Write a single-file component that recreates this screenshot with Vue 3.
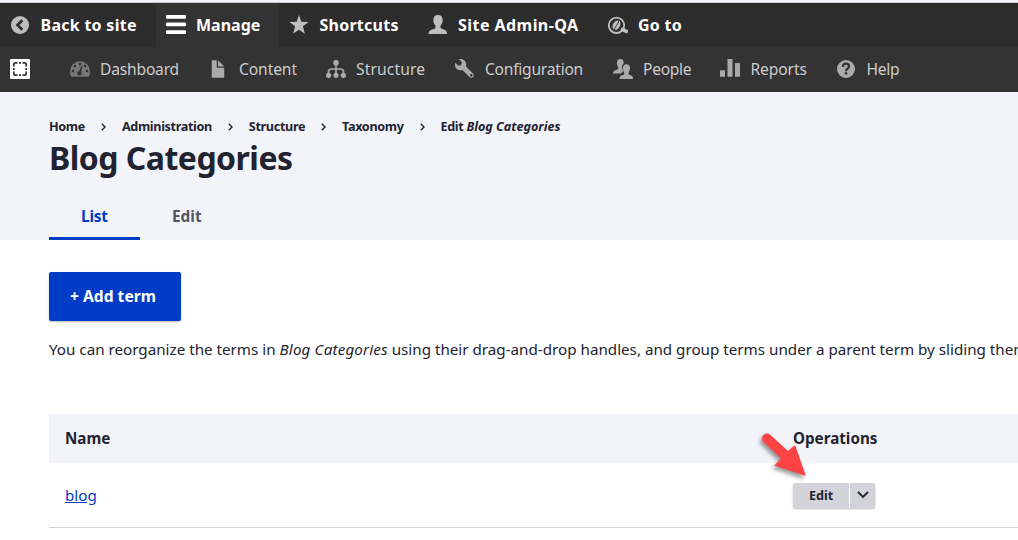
<script setup>
const crumbs = ['Home', 'Administration', 'Structure', 'Taxonomy']
</script>

<template>
  <div class="page">
    <nav class="bar">
      <a class="item w-back">
        <svg class="icon" viewBox="0 0 20 20"><circle cx="10" cy="10" r="9" fill="#bebebe" /><path d="M12.3 5.2 7.5 10l4.8 4.8" fill="none" stroke="#2d2d2d" stroke-width="2.7" /></svg>
        <span>Back to site</span>
      </a>
      <a class="item w-manage active">
        <svg class="icon" viewBox="0 0 20 20" fill="#fff"><rect y="0" width="20" height="3.7" rx="1" /><rect y="7.6" width="20" height="3.7" rx="1" /><rect y="15.2" width="20" height="3.7" rx="1" /></svg>
        <span>Manage</span>
      </a>
      <a class="item w-short">
        <svg class="icon" viewBox="0 0 20 20" fill="#bebebe"><path d="M10 0l2.4 6.7 7.2.2-5.7 4.400 2 7.500L10 14.700l-5.900 4.100 2-7.500L.4 6.900l7.200-.2z" /></svg>
        <span>Shortcuts</span>
      </a>
      <a class="item w-user">
        <svg class="icon" viewBox="0 0 20 20" fill="#bebebe"><path d="M10 0c3 0 4.700 2 4.700 4.900 0 2.300-1 4.400-2.100 5.700-.5 1.900-.1 2.900 1.500 3.400 3 .8 5.100 1.700 5.100 4.900H.6c0-3.200 2.200-4.100 5.200-4.900 1.700-.5 2.100-1.500 1.600-3.400C6.300 9.300 5.300 7.200 5.300 4.900 5.300 2 7 0 10 0z" /></svg>
        <span>Site Admin-QA</span>
      </a>
      <a class="item w-goto">
        <svg class="icon" viewBox="0 0 20 20"><circle cx="8.500" cy="10.300" r="7.700" fill="none" stroke="#bebebe" stroke-width="1.800" /><ellipse cx="8.500" cy="10.200" rx="3.500" ry="5.200" transform="rotate(32 8.500 10.200)" fill="#bebebe" /><path d="M6.300 15.200c.2-4 4-5 4.700-10" fill="none" stroke="#2d2d2d" stroke-width="1" /><path d="M14.500 14.400l3.800 2" stroke="#bebebe" stroke-width="3.600" stroke-linecap="round" /></svg>
        <span>Go to</span>
      </a>
    </nav>

    <nav class="tray">
      <a class="item t-toggle">
        <svg class="icon" viewBox="0 0 20 20"><rect width="20" height="20" rx="1" fill="#fff" /><path d="M3.800 7.500V5.300q0-1.500 1.500-1.500h2.200M12.500 3.800h2.200q1.500 0 1.500 1.500v2.200M16.200 12.500v2.200q0 1.500-1.500 1.500h-2.200M7.500 16.200H5.300q-1.500 0-1.500-1.500v-2.200M9 3.800h2M9 16.200h2M3.800 9v2M16.200 9v2" fill="none" stroke="#333" stroke-width="1.700" /></svg>
      </a>
      <a class="item t-dash">
        <svg class="icon" viewBox="0 0 20 20"><path d="M0 12.200a10 10 0 0 1 20 0c0 2.200-.5 3.900-1.300 5.600H1.300C.5 16.100 0 14.400 0 12.200z" fill="#777" /><g fill="#333"><circle cx="10" cy="5" r="1.300" /><circle cx="4.900" cy="7" r="1.300" /><circle cx="15.100" cy="7" r="1.300" /><circle cx="2.900" cy="12" r="1.300" /><circle cx="17.100" cy="12" r="1.300" /><circle cx="9.500" cy="14.200" r="2.200" /><path d="M8.800 13.800l2.300-6.500 1.300.4-1.800 6.700z" /></g></svg>
        <span>Dashboard</span>
      </a>
      <a class="item t-content">
        <svg class="icon file" viewBox="0 0 16 16" fill="#aaa"><path d="M12.502 7h-5c-.276 0-.502-.225-.502-.5v-5c0-.275-.225-.5-.5-.5h-3c-.276 0-.5.225-.5.5v13.029c0 .275.225.5.5.5h9.002c.275 0 .5-.225.5-.5v-7.029c0-.275-.225-.5-.5-.5zM8.502 6h4c.275 0 .34-.159.146-.354l-4.293-4.292c-.195-.195-.353-.129-.353.146v4c0 .275.225.5.5.5z" /></svg>
        <span>Content</span>
      </a>
      <a class="item t-struct">
        <svg class="icon" viewBox="0 0 20 20"><path d="M10 5v12M2.500 16v-3q0-3 3-3h9q3 0 3 3v3" fill="none" stroke="#aaa" stroke-width="1.700" /><g fill="#aaa"><circle cx="10" cy="3.800" r="2.800" /><circle cx="2.600" cy="16.300" r="2.600" /><circle cx="10" cy="16.300" r="2.600" /><circle cx="17.400" cy="16.300" r="2.600" /></g></svg>
        <span>Structure</span>
      </a>
      <a class="item t-config">
        <svg class="icon" viewBox="0 0 16 16" fill="#aaa"><path d="M14.416 11.586l-.01-.008v-.001l-5.656-5.656c.15-.449.252-.921.252-1.421 0-2.485-2.016-4.500-4.502-4.500-.505 0-.981.102-1.434.255l2.431 2.431-.588 2.196-2.196.588-2.445-2.445c-.162.464-.268.956-.268 1.475 0 2.486 2.014 4.500 4.500 4.500.5 0 .972-.102 1.421-.251l5.667 5.665c.781.781 2.047.781 2.828 0s.781-2.047 0-2.828zm-1.415 2.414c-.553 0-1-.448-1-1s.447-1 1-1 1 .448 1 1-.447 1-1 1z" /></svg>
        <span>Configuration</span>
      </a>
      <a class="item t-people">
        <svg class="icon" viewBox="0 0 20 20" fill="#aaa"><path d="M7.500 0c2.200 0 3.400 1.500 3.200 3.700L10.300 5C8.900 6.100 8.700 8.200 9.600 10c.5 1 .8 2 .2 3-.7.600-1.800.9-2.600 1.600H0c0-2.400 1-3 3.200-3.700 2-.6 2.400-1.200 2-2.700C4.300 7 3.900 5.500 3.900 3.700 3.900 1.500 5.200 0 7.500 0z" /><path d="M13.500 5.300c2.300 0 3.500 1.500 3.500 3.700 0 1.800-.5 3.300-1.400 4.500-.4 1.500 0 2.100 1.500 2.600 2 .6 2.900 1.300 2.900 3.900H6.500c0-2.600 1-3.300 3-3.900 1.700-.5 2.100-1.100 1.700-2.600-.9-1.200-1.300-2.700-1.300-4.500 0-2.200 1.300-3.700 3.600-3.700z" stroke="#333" stroke-width=".8" paint-order="stroke" /></svg>
        <span>People</span>
      </a>
      <a class="item t-reports">
        <svg class="icon" viewBox="0 0 20 20" fill="#aaa"><rect y="11.300" width="5" height="6.500" rx=".6" /><rect x="7.500" y="0" width="5" height="17.800" rx=".6" /><rect x="15" y="4" width="5" height="13.800" rx=".6" /></svg>
        <span>Reports</span>
      </a>
      <a class="item t-help">
        <svg class="icon" viewBox="0 0 20 20"><circle cx="10" cy="10" r="9" fill="#aaa" /><path d="M6.900 7.900C6.900 3.700 13 3.700 13 7.300c0 2.500-3 2.200-3 5" fill="none" stroke="#333" stroke-width="2.300" /><rect x="8.800" y="13.200" width="2.500" height="2.400" rx=".4" fill="#333" /></svg>
        <span>Help</span>
      </a>
    </nav>

    <header class="head">
      <ol class="crumbs">
        <li v-for="c in crumbs" :key="c"><span>{{ c }}</span><svg class="sep" viewBox="0 0 5 8"><path d="M.8.8 4 4 .8 7.200" fill="none" stroke="#222330" stroke-width="1.400" /></svg></li>
        <li><span>Edit <em>Blog Categories</em></span></li>
      </ol>
      <h1>Blog Categories</h1>
      <div class="tabs">
        <a class="tab on">List</a>
        <a class="tab">Edit</a>
      </div>
    </header>

    <main>
      <a class="add">+ Add term</a>
      <p class="help">You can reorganize the terms in <em>Blog Categories</em> using their drag-and-drop handles, and group terms under a parent term by sliding them</p>
      <div class="row thead"><span>Name</span><span>Operations</span></div>
      <div class="row">
        <a class="link">blog</a>
        <div class="drop">
          <a class="edit">Edit</a>
          <a class="more"><svg viewBox="0 0 12 8"><path d="M1 1l5 5 5-5" fill="none" stroke="#222330" stroke-width="1.800" /></svg></a>
        </div>
      </div>
    </main>
    <svg class="arrow" viewBox="0 0 60 60"><path d="M13.500 15a5 5 0 0 1 7 0L38 31 45 25 56 56 24.300 45.500 31 38.500 13.500 22a5 5 0 0 1 0-7z" fill="#fd4343" /></svg>
  </div>
</template>

<style>
body { margin: 0; overflow: hidden; }
</style>
<style scoped>
.page { position: relative; box-sizing: border-box; width: 1018px; height: 540px; overflow: hidden; border-top: 2px solid #f3f4f9; background: #fff; color: #222330; font: 15.2px/24px "Noto Sans", sans-serif; }
.bar, .tray { display: flex; font-size: 16px; }
.bar { height: 44px; border-top: 1px solid #ccc; background: #2d2d2d; color: #fff; font-weight: 700; }
.tray { height: 45px; background: #333; color: #ccc; font-size: 15.6px; }
.tray span { margin-top: -2px; }
.item { box-sizing: border-box; display: flex; align-items: center; gap: 10px; padding-left: 10px; white-space: nowrap; }
.icon { flex: none; width: 20px; height: 20px; }
.tray .icon { margin-top: -1px; }
.file { margin: 0 1px 0 -1px; }
.active { background: #333; }
.w-back { width: 156px; letter-spacing: .27px; }
.w-manage { width: 123px; }
.w-short { width: 139px; letter-spacing: .25px; }
.w-user { width: 180px; letter-spacing: .45px; }
.w-goto { letter-spacing: .25px; }
.w-back, .w-short { gap: 10.500px; }
.t-toggle { width: 60px; }
.t-dash { width: 139px; letter-spacing: -.19px; }
.t-content { width: 117px; letter-spacing: -.1px; }
.t-struct { width: 129px; letter-spacing: .15px; }
.t-config { width: 158px; letter-spacing: -.24px; }
.t-people { width: 107px; letter-spacing: -.3px; }
.t-reports { width: 116px; letter-spacing: -.1px; gap: 10.500px; }
.t-help { letter-spacing: -.3px; gap: 10.500px; }
.head { box-sizing: border-box; height: 148px; padding: 25px 49px 0; background: #f3f4f9; }
.crumbs { display: flex; margin: 0; padding: 0; list-style: none; font: 700 12.600px/20px "Noto Sans", sans-serif; letter-spacing: -.33px; }
.crumbs li { display: flex; align-items: center; white-space: nowrap; }
.crumbs em { letter-spacing: 0; }
.sep { width: 5px; height: 8px; margin: 0 16px 0 15.900px; }
h1 { margin: 1px 0 0; font: 700 32px/40px "Noto Sans", sans-serif; letter-spacing: -.52px; }
.tabs { display: flex; margin-top: 14px; font-size: 15.400px; font-weight: 700; }
.tab { box-sizing: border-box; height: 48px; width: 91px; padding: 13px 0 0 32px; color: #545560; }
.on { color: #003cc5; border-bottom: 3px solid #003cc5; letter-spacing: -.2px; }
main { padding: 32px 0 0 49px; }
.add { box-sizing: border-box; display: flex; align-items: center; justify-content: center; width: 132px; height: 49px; padding: 0 4px 1px 0; border-radius: 2px; background: #003cc5; color: #fff; font-size: 15.600px; font-weight: 700; box-shadow: 0 1px 2px #0004; }
.help { margin: 16px 0 0; white-space: nowrap; }
.help em { letter-spacing: .15px; }
.row { box-sizing: border-box; display: flex; align-items: center; height: 65px; padding-left: 16px; border-bottom: 1px solid #d3d4d9; }
.row > :first-child { width: 728px; }
.thead { height: 49px; margin-top: 53px; padding-bottom: 1px; border: 0; background: #f3f4f9; font-weight: 700; }
.link { color: #003cc5; text-decoration: underline; }
.drop { display: flex; gap: 1px; height: 25px; font: 700 12.600px/25px "Noto Sans", sans-serif; border-radius: 2px; box-shadow: 0 1px 2px #0004; }
.edit, .more { display: flex; align-items: center; justify-content: center; background: #d3d4d9; border-radius: 2px 0 0 2px; }
.edit { width: 56px; }
.more { width: 25px; border-radius: 0 2px 2px 0; }
.more svg { width: 12px; height: 8px; }
.arrow { position: absolute; left: 750px; top: 418px; width: 60px; height: 60px; filter: drop-shadow(-2px 3px 2px #0006); }
</style>
